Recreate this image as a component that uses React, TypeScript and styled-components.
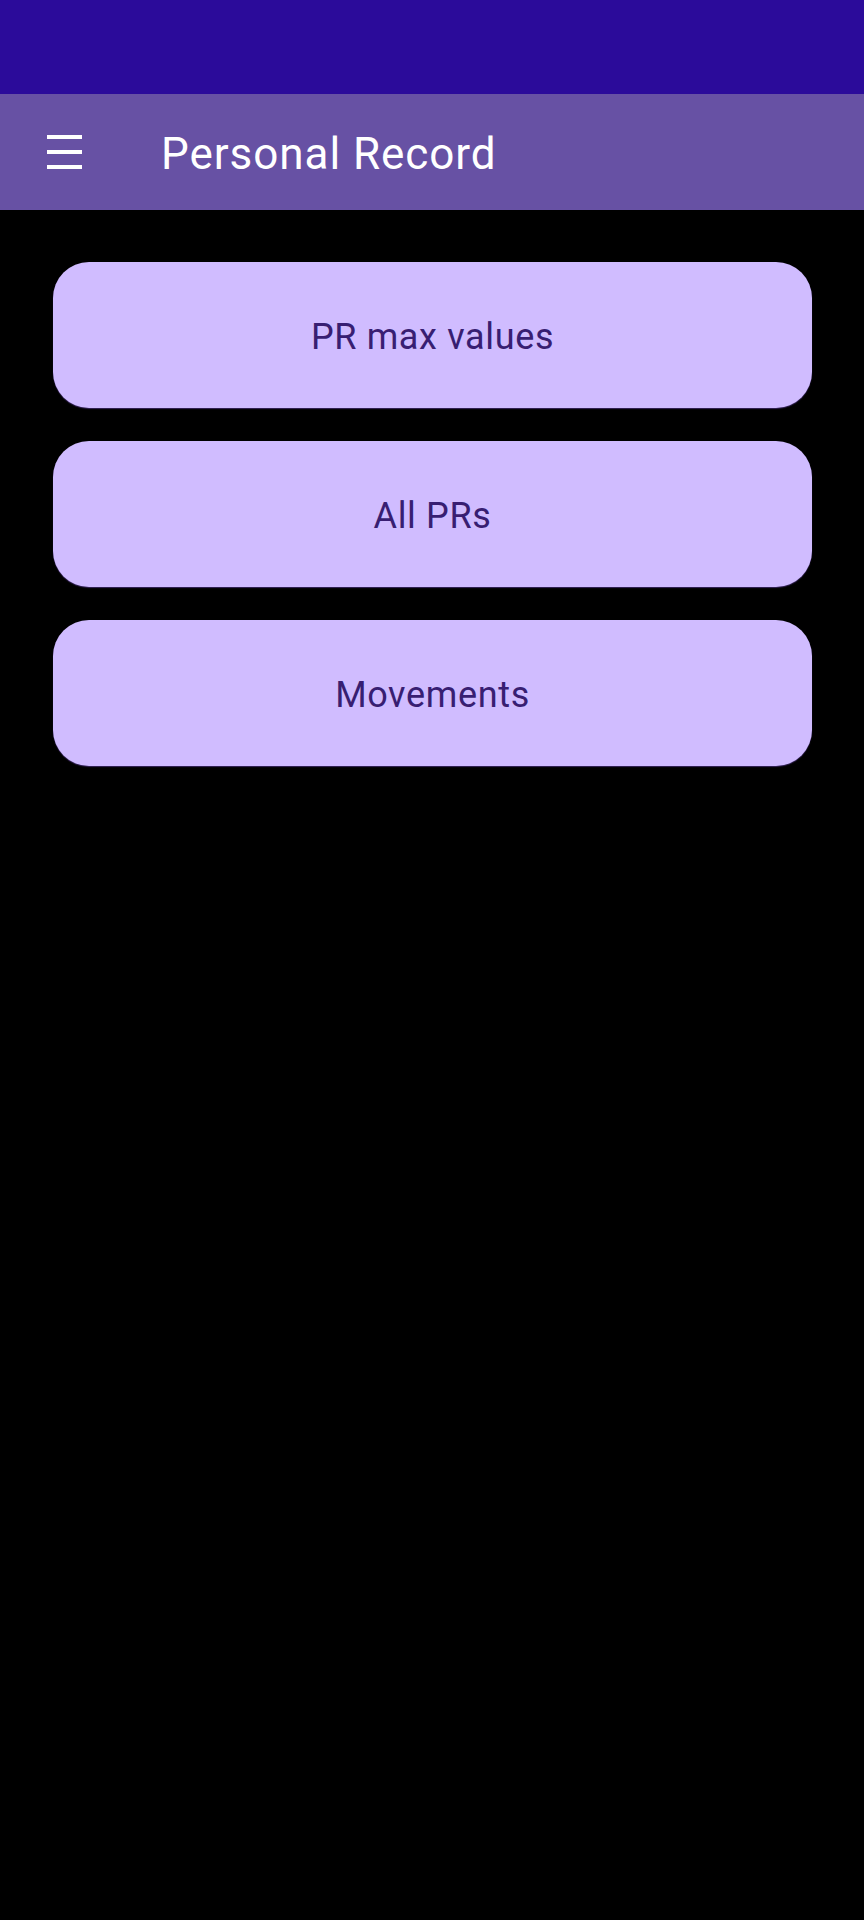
import React from "react";
import styled, { createGlobalStyle } from "styled-components";

const GlobalStyle = createGlobalStyle`
  html, body {
    margin: 0;
    padding: 0;
    background: #000000;
    font-family: Roboto, "Noto Sans", Arial, sans-serif;
  }
  * { box-sizing: border-box; }
`;

const Screen = styled.div`
  width: 864px;
  min-height: 1920px;
  background: #000000;
  display: flex;
  flex-direction: column;
`;

const StatusBar = styled.div`
  height: 94px;
  background: #2b0b9a;
`;

const AppBar = styled.header`
  height: 116px;
  background: #6751a4;
  display: flex;
  align-items: center;
  padding-left: 47px;
`;

const MenuButton = styled.button`
  width: 35px;
  height: 34px;
  padding: 0;
  border: none;
  background: transparent;
  display: flex;
  flex-direction: column;
  justify-content: space-between;
  margin-right: 79px;
  cursor: pointer;
`;

const MenuBar = styled.span`
  display: block;
  width: 35px;
  height: 4px;
  background: #ffffff;
`;

const Title = styled.h1`
  margin: 0;
  font-family: Roboto, "Noto Sans", Arial, sans-serif;
  font-weight: 400;
  font-size: 44px;
  color: #ffffff;
  line-height: 1;
  letter-spacing: 0.95px;
  position: relative;
  top: 2px;
`;

const Content = styled.main`
  display: flex;
  flex-direction: column;
  gap: 33px;
  padding: 52px 52px 0 53px;
`;

const MenuItem = styled.button`
  height: 146px;
  width: 100%;
  border: none;
  border-radius: 36px;
  background: #d0bcff;
  color: #381e72;
  font-family: Roboto, "Noto Sans", Arial, sans-serif;
  font-size: 36px;
  font-weight: 400;
  letter-spacing: 0.65px;
  display: flex;
  align-items: center;
  justify-content: center;
  padding: 3px 0 0;
  box-shadow: 0 1px 1px rgba(90, 60, 150, 0.6);
  cursor: pointer;
`;

const items = ["PR max values", "All PRs", "Movements"];

export default function App() {
  return (
    <>
      <GlobalStyle />
      <Screen>
        <StatusBar />
        <AppBar>
          <MenuButton aria-label="menu">
            <MenuBar />
            <MenuBar />
            <MenuBar />
          </MenuButton>
          <Title>Personal Record</Title>
        </AppBar>
        <Content>
          {items.map((label) => (
            <MenuItem key={label}>{label}</MenuItem>
          ))}
        </Content>
      </Screen>
    </>
  );
}
